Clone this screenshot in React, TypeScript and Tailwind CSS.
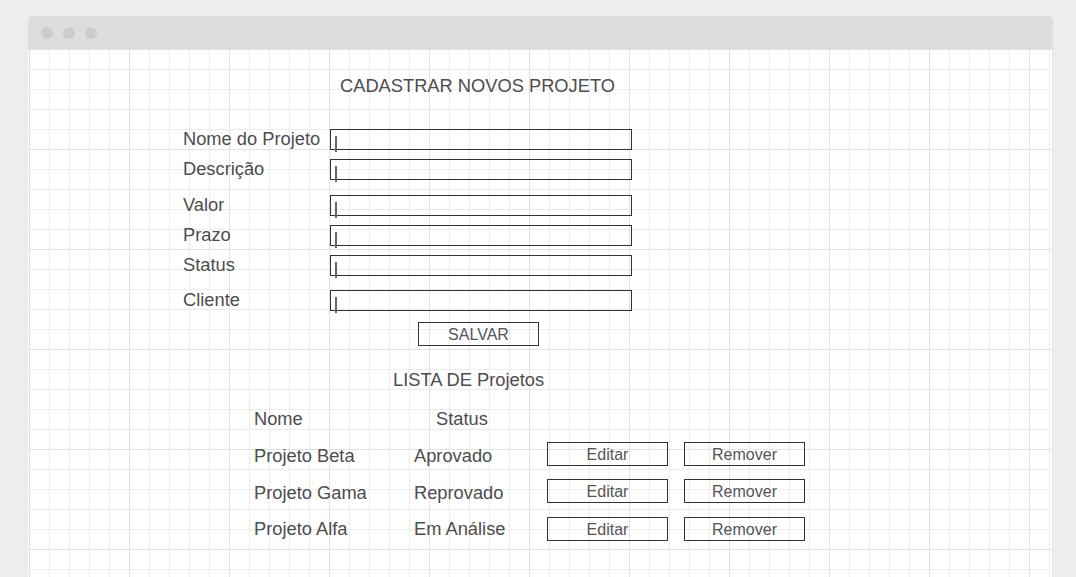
import React from "react";

const fields: { label: string; mt: string }[] = [
  { label: "Nome do Projeto", mt: "mt-[31px]" },
  { label: "Descrição", mt: "mt-[9px]" },
  { label: "Valor", mt: "mt-[15px]" },
  { label: "Prazo", mt: "mt-[9px]" },
  { label: "Status", mt: "mt-[9px]" },
  { label: "Cliente", mt: "mt-[14px]" },
];

const projects: { name: string; status: string; mt: string; pt: string }[] = [
  { name: "Projeto Beta", status: "Aprovado", mt: "mt-[11px]", pt: "pt-[3px]" },
  { name: "Projeto Gama", status: "Reprovado", mt: "mt-[13px]", pt: "pt-[3px]" },
  { name: "Projeto Alfa", status: "Em Análise", mt: "mt-[14px]", pt: "pt-0" },
];

function BoxButton({ children }: { children: React.ReactNode }) {
  return (
    <div className="w-[121px] h-[24px] border border-[#333333] flex items-center justify-center pt-[1px] text-[16px] leading-none text-[#555555]">
      {children}
    </div>
  );
}

export default function App() {
  return (
    <div
      className="w-[1076px] h-[577px] bg-[#ededed] pt-[16px] pl-[28px] overflow-hidden text-[#4d4d4d]"
      style={{ fontFamily: '"Liberation Sans", Arial, sans-serif' }}
    >
      <div className="w-[1025px] rounded-t-[5px] overflow-hidden">
        <div className="h-[33px] bg-[#dddddd] flex items-center gap-[10px] pl-[13px]">
          <div className="w-[12px] h-[12px] rounded-full bg-[#cccccc]" />
          <div className="w-[12px] h-[12px] rounded-full bg-[#cccccc]" />
          <div className="w-[12px] h-[12px] rounded-full bg-[#cccccc]" />
        </div>
        <div className="h-[528px] bg-white border-r border-[#e4e4e4] bg-[image:linear-gradient(to_right,#e2e2e2_1px,transparent_1px),linear-gradient(to_bottom,#e2e2e2_1px,transparent_1px),linear-gradient(to_right,#ececec_1px,transparent_1px),linear-gradient(to_bottom,#ececec_1px,transparent_1px)] bg-[size:100px_100px,100px_100px,20px_20px,20px_20px] bg-[position:1px_0,1px_0,1px_0,1px_0] pl-[155px] pt-[25px]">
          <div className="ml-[157px] text-[18.3px] leading-[24px]">CADASTRAR NOVOS PROJETO</div>

          {fields.map((f) => (
            <div key={f.label} className={`${f.mt} flex items-center h-[21px]`}>
              <div className="w-[147px] text-[18.3px] leading-[24px] whitespace-nowrap pb-[1px]">{f.label}</div>
              <div className="w-[302px] h-[21px] border border-[#333333] flex items-start">
                <div className="ml-[4px] mt-[6px] w-[2px] h-[16px] bg-[#666666] shrink-0" />
              </div>
            </div>
          ))}

          <div className="mt-[11px] ml-[235px] w-[121px] h-[24px] border border-[#333333] flex items-center justify-center pt-[1px] text-[16px] leading-none text-[#555555]">
            SALVAR
          </div>

          <div className="mt-[22px] ml-[210px] text-[18.3px] leading-[24px]">LISTA DE Projetos</div>

          <div className="mt-[15px] ml-[71px] flex h-[24px] items-center text-[18.3px] leading-[24px]">
            <div className="w-[160px]">Nome</div>
            <div className="w-[133px] pl-[22px]">Status</div>
          </div>

          {projects.map((p) => (
            <div key={p.name} className={`${p.mt} ml-[71px] flex h-[24px] items-center text-[18.3px] leading-[24px]`}>
              <div className={`w-[160px] ${p.pt}`}>{p.name}</div>
              <div className={`w-[133px] ${p.pt}`}>{p.status}</div>
              <BoxButton>Editar</BoxButton>
              <div className="w-[16px]" />
              <BoxButton>Remover</BoxButton>
            </div>
          ))}
        </div>
      </div>
    </div>
  );
}
